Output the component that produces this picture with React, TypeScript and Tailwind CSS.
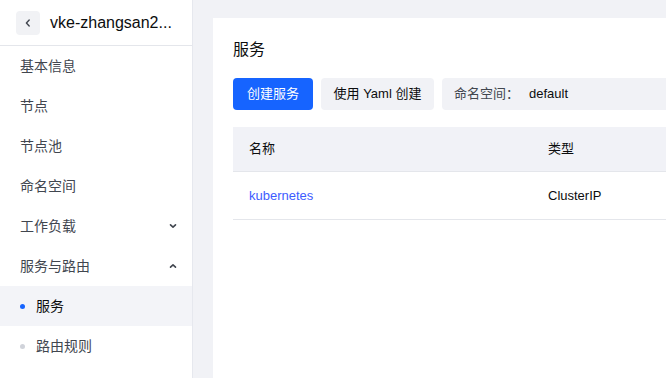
import React from "react";

const menu = [
  { label: "基本信息" },
  { label: "节点" },
  { label: "节点池" },
  { label: "命名空间" },
  { label: "工作负载", chevron: "down" },
  { label: "服务与路由", chevron: "up" },
];

function Chevron({ dir }: { dir: "up" | "down" }) {
  return (
    <svg width="10" height="10" viewBox="0 0 10 10" fill="none">
      {dir === "down" ? (
        <path d="M2.5 3.8 L5 6.2 L7.5 3.8" stroke="#41464f" strokeWidth="1.6" strokeLinecap="round" strokeLinejoin="round" />
      ) : (
        <path d="M2.5 6.2 L5 3.8 L7.5 6.2" stroke="#41464f" strokeWidth="1.6" strokeLinecap="round" strokeLinejoin="round" />
      )}
    </svg>
  );
}

export default function App() {
  return (
    <div
      className="flex w-[666px] h-[378px] overflow-hidden bg-[#f1f2f6]"
      style={{ fontFamily: "'Liberation Sans', 'Noto Sans CJK SC', sans-serif" }}
    >
      <aside className="w-[193px] shrink-0 bg-white border-r border-[#e6e8ee] flex flex-col">
        <div className="h-[46px] flex items-center px-4 gap-[10px] border-b border-[#e4e6eb]">
          <div className="w-6 h-6 rounded bg-[#f1f2f5] flex items-center justify-center shrink-0">
            <svg width="12" height="12" viewBox="0 0 12 12" fill="none">
              <path d="M7.2 3 L4.4 6 L7.2 9" stroke="#41464f" strokeWidth="1.4" strokeLinecap="round" strokeLinejoin="round" />
            </svg>
          </div>
          <div className="text-[16px] text-[#0c0d0e] whitespace-nowrap leading-6">vke-zhangsan2...</div>
        </div>
        {menu.map((m) => (
          <div key={m.label} className="h-10 flex items-center justify-between pl-5 pr-[14px] text-[14px] text-[#41464f]">
            <span>{m.label}</span>
            {m.chevron && <Chevron dir={m.chevron as "up" | "down"} />}
          </div>
        ))}
        <div className="h-10 flex items-center pl-5 bg-[#f3f4f8] text-[14px] text-[#0c0d0e]">
          <span className="w-[5px] h-[5px] rounded-full bg-[#1664ff] mr-[11px]" />
          <span>服务</span>
        </div>
        <div className="h-10 flex items-center pl-5 text-[14px] text-[#41464f]">
          <span className="w-[5px] h-[5px] rounded-full bg-[#d0d3da] mr-[11px]" />
          <span>路由规则</span>
        </div>
      </aside>
      <main className="flex-1 pl-5 pt-[18px]">
        <div className="bg-white h-full pl-5 pt-5">
          <h1 className="text-[16px] leading-6 text-[#0c0d0e] font-normal">服务</h1>
          <div className="flex gap-2 mt-4 h-8">
            <button className="w-20 h-8 rounded bg-[#1664ff] text-white text-[13px]">创建服务</button>
            <button className="w-[113px] h-8 rounded bg-[#f1f2f6] text-[#0c0d0e] text-[13px]">使用 Yaml 创建</button>
            <div className="flex-1 h-8 rounded-l bg-[#f1f2f6] flex items-center pl-3 text-[13px]">
              <span className="text-[#41464f]">命名空间：</span>
              <span className="ml-[10px] text-[#0c0d0e]">default</span>
            </div>
          </div>
          <div className="mt-[17px]">
            <div className="h-[45px] bg-[#f1f2f7] border-b border-[#e4e6eb] flex items-center text-[13px] text-[#0c0d0e]">
              <span className="pl-4 w-[315px]">名称</span>
              <span>类型</span>
            </div>
            <div className="h-[48px] border-b border-[#e4e6eb] flex items-center text-[13px]">
              <span className="pl-4 w-[315px] text-[#3d5cff]">kubernetes</span>
              <span className="text-[#0c0d0e]">ClusterIP</span>
            </div>
          </div>
        </div>
      </main>
    </div>
  );
}
